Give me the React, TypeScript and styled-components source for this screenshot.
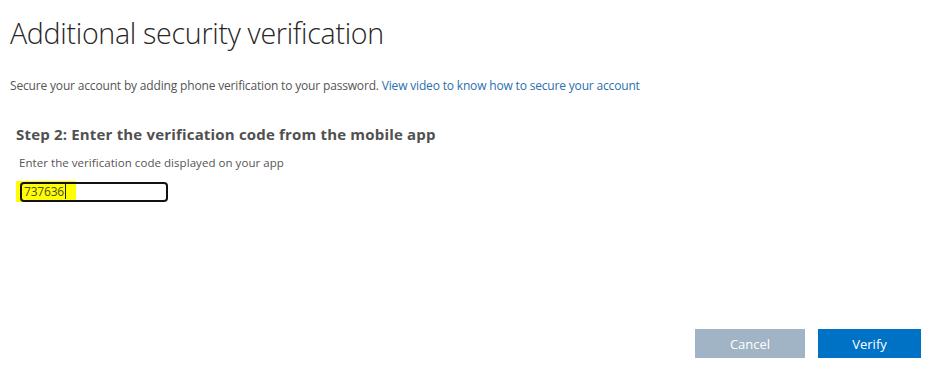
import styled, { createGlobalStyle } from 'styled-components';

const GlobalStyle = createGlobalStyle`
  html, body {
    margin: 0;
    padding: 0;
    background: #ffffff;
  }
  body {
    font-family: 'Open Sans', 'Noto Sans', sans-serif;
  }
`;

const App: React.FC = () => {
  return (
    <Page>
      <GlobalStyle />
      <Title>Additional security verification</Title>
      <Intro>
        Secure your account by adding phone verification to your password.{' '}
        <Link href="#">View video to know how to secure your account</Link>
      </Intro>
      <Step>
        <StepTitle>Step 2: Enter the verification code from the mobile app</StepTitle>
        <Hint>Enter the verification code displayed on your app</Hint>
        <CodeField>
          <Highlight>
            737636
            <Caret />
          </Highlight>
        </CodeField>
      </Step>
      <Actions>
        <Button variant="secondary">Cancel</Button>
        <Button variant="primary">Verify</Button>
      </Actions>
    </Page>
  );
};

const Page = styled.div`
  min-height: 375px;
  box-sizing: border-box;
  display: flex;
  flex-direction: column;
  padding: 0 13px 17px 10px;
`;

const Title = styled.h1`
  margin: 13px 0 0;
  font-weight: 300;
  font-size: 28.6px;
  line-height: 40px;
  color: #262626;
  letter-spacing: -0.3px;
`;

const Intro = styled.p`
  margin: 24px 0 0;
  font-size: 12px;
  line-height: 17px;
  color: #555555;
  letter-spacing: -0.17px;
`;

const Link = styled.a`
  color: #2a6fae;
  text-decoration: none;
`;

const Step = styled.section`
  display: flex;
  flex-direction: column;
  align-items: flex-start;
  padding-left: 6px;
  margin-top: 30px;
`;

const StepTitle = styled.h2`
  margin: 0;
  font-size: 15px;
  font-weight: 700;
  line-height: 20px;
  color: #505050;
  letter-spacing: 0.18px;
`;

const Hint = styled.div`
  margin: 11px 0 0 3px;
  font-size: 11.5px;
  line-height: 16px;
  color: #555555;
  letter-spacing: 0.05px;
`;

const CodeField = styled.div`
  margin: 11px 0 0 4px;
  width: 148px;
  height: 20px;
  display: flex;
  align-items: center;
  position: relative;

  &::after {
    content: '';
    position: absolute;
    inset: 0;
    border: 2px solid #111111;
    border-radius: 4px;
    pointer-events: none;
  }
`;

const Highlight = styled.span`
  display: flex;
  align-items: center;
  height: 21px;
  margin: -1px 0 0 -4px;
  padding: 0 10px 0 8px;
  background: #ffff00;
  font-size: 12px;
  color: #4a4a2a;
  letter-spacing: -0.2px;
`;

const Caret = styled.span`
  width: 1px;
  height: 15px;
  margin-left: 1px;
  background: #222222;
`;

const Actions = styled.div`
  margin-top: auto;
  display: flex;
  justify-content: flex-end;
  gap: 13px;
`;

const Button = styled.button<{ variant: 'primary' | 'secondary' }>`
  height: 29px;
  width: ${({ variant }) => (variant === 'primary' ? '103px' : '110px')};
  border: none;
  font-family: 'Open Sans', 'Noto Sans', sans-serif;
  font-size: 13px;
  color: #ffffff;
  background: ${({ variant }) => (variant === 'primary' ? '#0072c6' : '#a0b4c6')};
  cursor: pointer;
`;

export default App;
